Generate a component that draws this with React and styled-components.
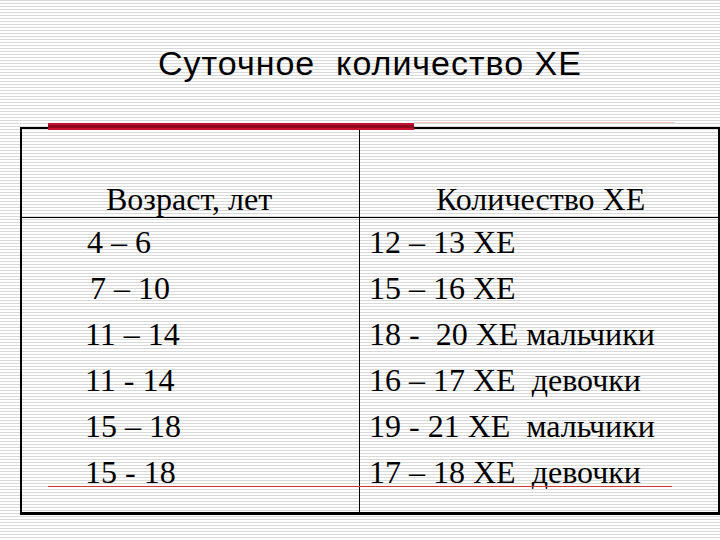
import React from "react";
import styled, { createGlobalStyle } from "styled-components";

const GlobalStyle = createGlobalStyle`
    html, body {
        margin: 0;
        padding: 0;
    }
`;

const ageRows = [
    { text: "4 – 6", indent: 2 },
    { text: "7 – 10", indent: 5 },
    { text: "11 – 14", indent: 0 },
    { text: "11 - 14", indent: 0 },
    { text: "15 – 18", indent: 0 },
    { text: "15 - 18", indent: 0 },
];

const amountRows = [
    "12 – 13 ХЕ",
    "15 – 16 ХЕ",
    "18 -  20 ХЕ мальчики",
    "16 – 17 ХЕ  девочки",
    "19 - 21 ХЕ  мальчики",
    "17 – 18 ХЕ  девочки",
];

const App = () => {
    return (
        <>
            <GlobalStyle />
            <Slide>
                <Title>Суточное&nbsp; количество ХЕ</Title>
                <TableWrap>
                    <AccentBar />
                    <AccentTail />
                    <BottomRule />
                    <Table>
                        <HeadCell $divider $indent={84}>Возраст, лет</HeadCell>
                        <HeadCell $indent={76}>Количество ХЕ</HeadCell>
                        <Column $divider>
                            {ageRows.map((row) => (
                                <Line key={row.text} $indent={63 + row.indent}>{row.text}</Line>
                            ))}
                        </Column>
                        <Column>
                            {amountRows.map((row) => (
                                <Line key={row} $indent={9}>{row}</Line>
                            ))}
                        </Column>
                    </Table>
                </TableWrap>
            </Slide>
        </>
    );
};

export default App;

const Slide = styled.div`
    width: 720px;
    height: 540px;
    overflow: hidden;
    box-sizing: border-box;
    padding-top: 42px;
    background-color: #ffffff;
    background-image: repeating-linear-gradient(
        to bottom,
        #d9d9d9 0px,
        #d9d9d9 1px,
        #ffffff 1px,
        #ffffff 3px
    );
`;

const Title = styled.h1`
    margin: 0 0 0 20px;
    width: 700px;
    text-align: center;
    font-family: "Liberation Sans", Arial, sans-serif;
    font-weight: normal;
    font-size: 34px;
    letter-spacing: 1px;
    line-height: 42px;
    color: #000;
    white-space: pre;
`;

const TableWrap = styled.div`
    position: relative;
    margin: 43px 0 0 20px;
    width: 700px;
`;

const AccentBar = styled.div`
    position: absolute;
    left: 28px;
    top: -4px;
    width: 366px;
    height: 7px;
    background: linear-gradient(to bottom, #c41230 0, #c41230 2px, #8e0a1e 2px, #8e0a1e 5px, #c41230 5px);
    z-index: 2;
`;

const AccentTail = styled.div`
    position: absolute;
    left: 394px;
    top: -5px;
    width: 261px;
    height: 1px;
    background: #f2c4c4;
    z-index: 2;
`;

const BottomRule = styled.div`
    position: absolute;
    left: 28px;
    top: 359px;
    width: 624px;
    height: 1px;
    background: #d4343c;
    z-index: 2;
`;

const Table = styled.div`
    display: grid;
    grid-template-columns: 338px 1fr;
    border-top: 2px solid #000;
    border-left: 2px solid #000;
    border-right: 2px solid #000;
    border-bottom: 3px solid #000;
    font-family: "Liberation Serif", "Times New Roman", serif;
    font-size: 32px;
    color: #000;
`;

const HeadCell = styled.div`
    height: 89px;
    box-sizing: border-box;
    display: flex;
    align-items: flex-end;
    padding-left: ${(p) => p.$indent}px;
    line-height: 36px;
    border-bottom: 1px solid #000;
    border-right: ${(p) => (p.$divider ? "1px solid #000" : "none")};
    white-space: pre;
`;

const Column = styled.div`
    display: flex;
    flex-direction: column;
    padding-top: 1px;
    padding-bottom: 17px;
    border-right: ${(p) => (p.$divider ? "1px solid #000" : "none")};
`;

const Line = styled.div`
    height: 46px;
    line-height: 46px;
    padding-left: ${(p) => p.$indent}px;
    white-space: pre;
`;
